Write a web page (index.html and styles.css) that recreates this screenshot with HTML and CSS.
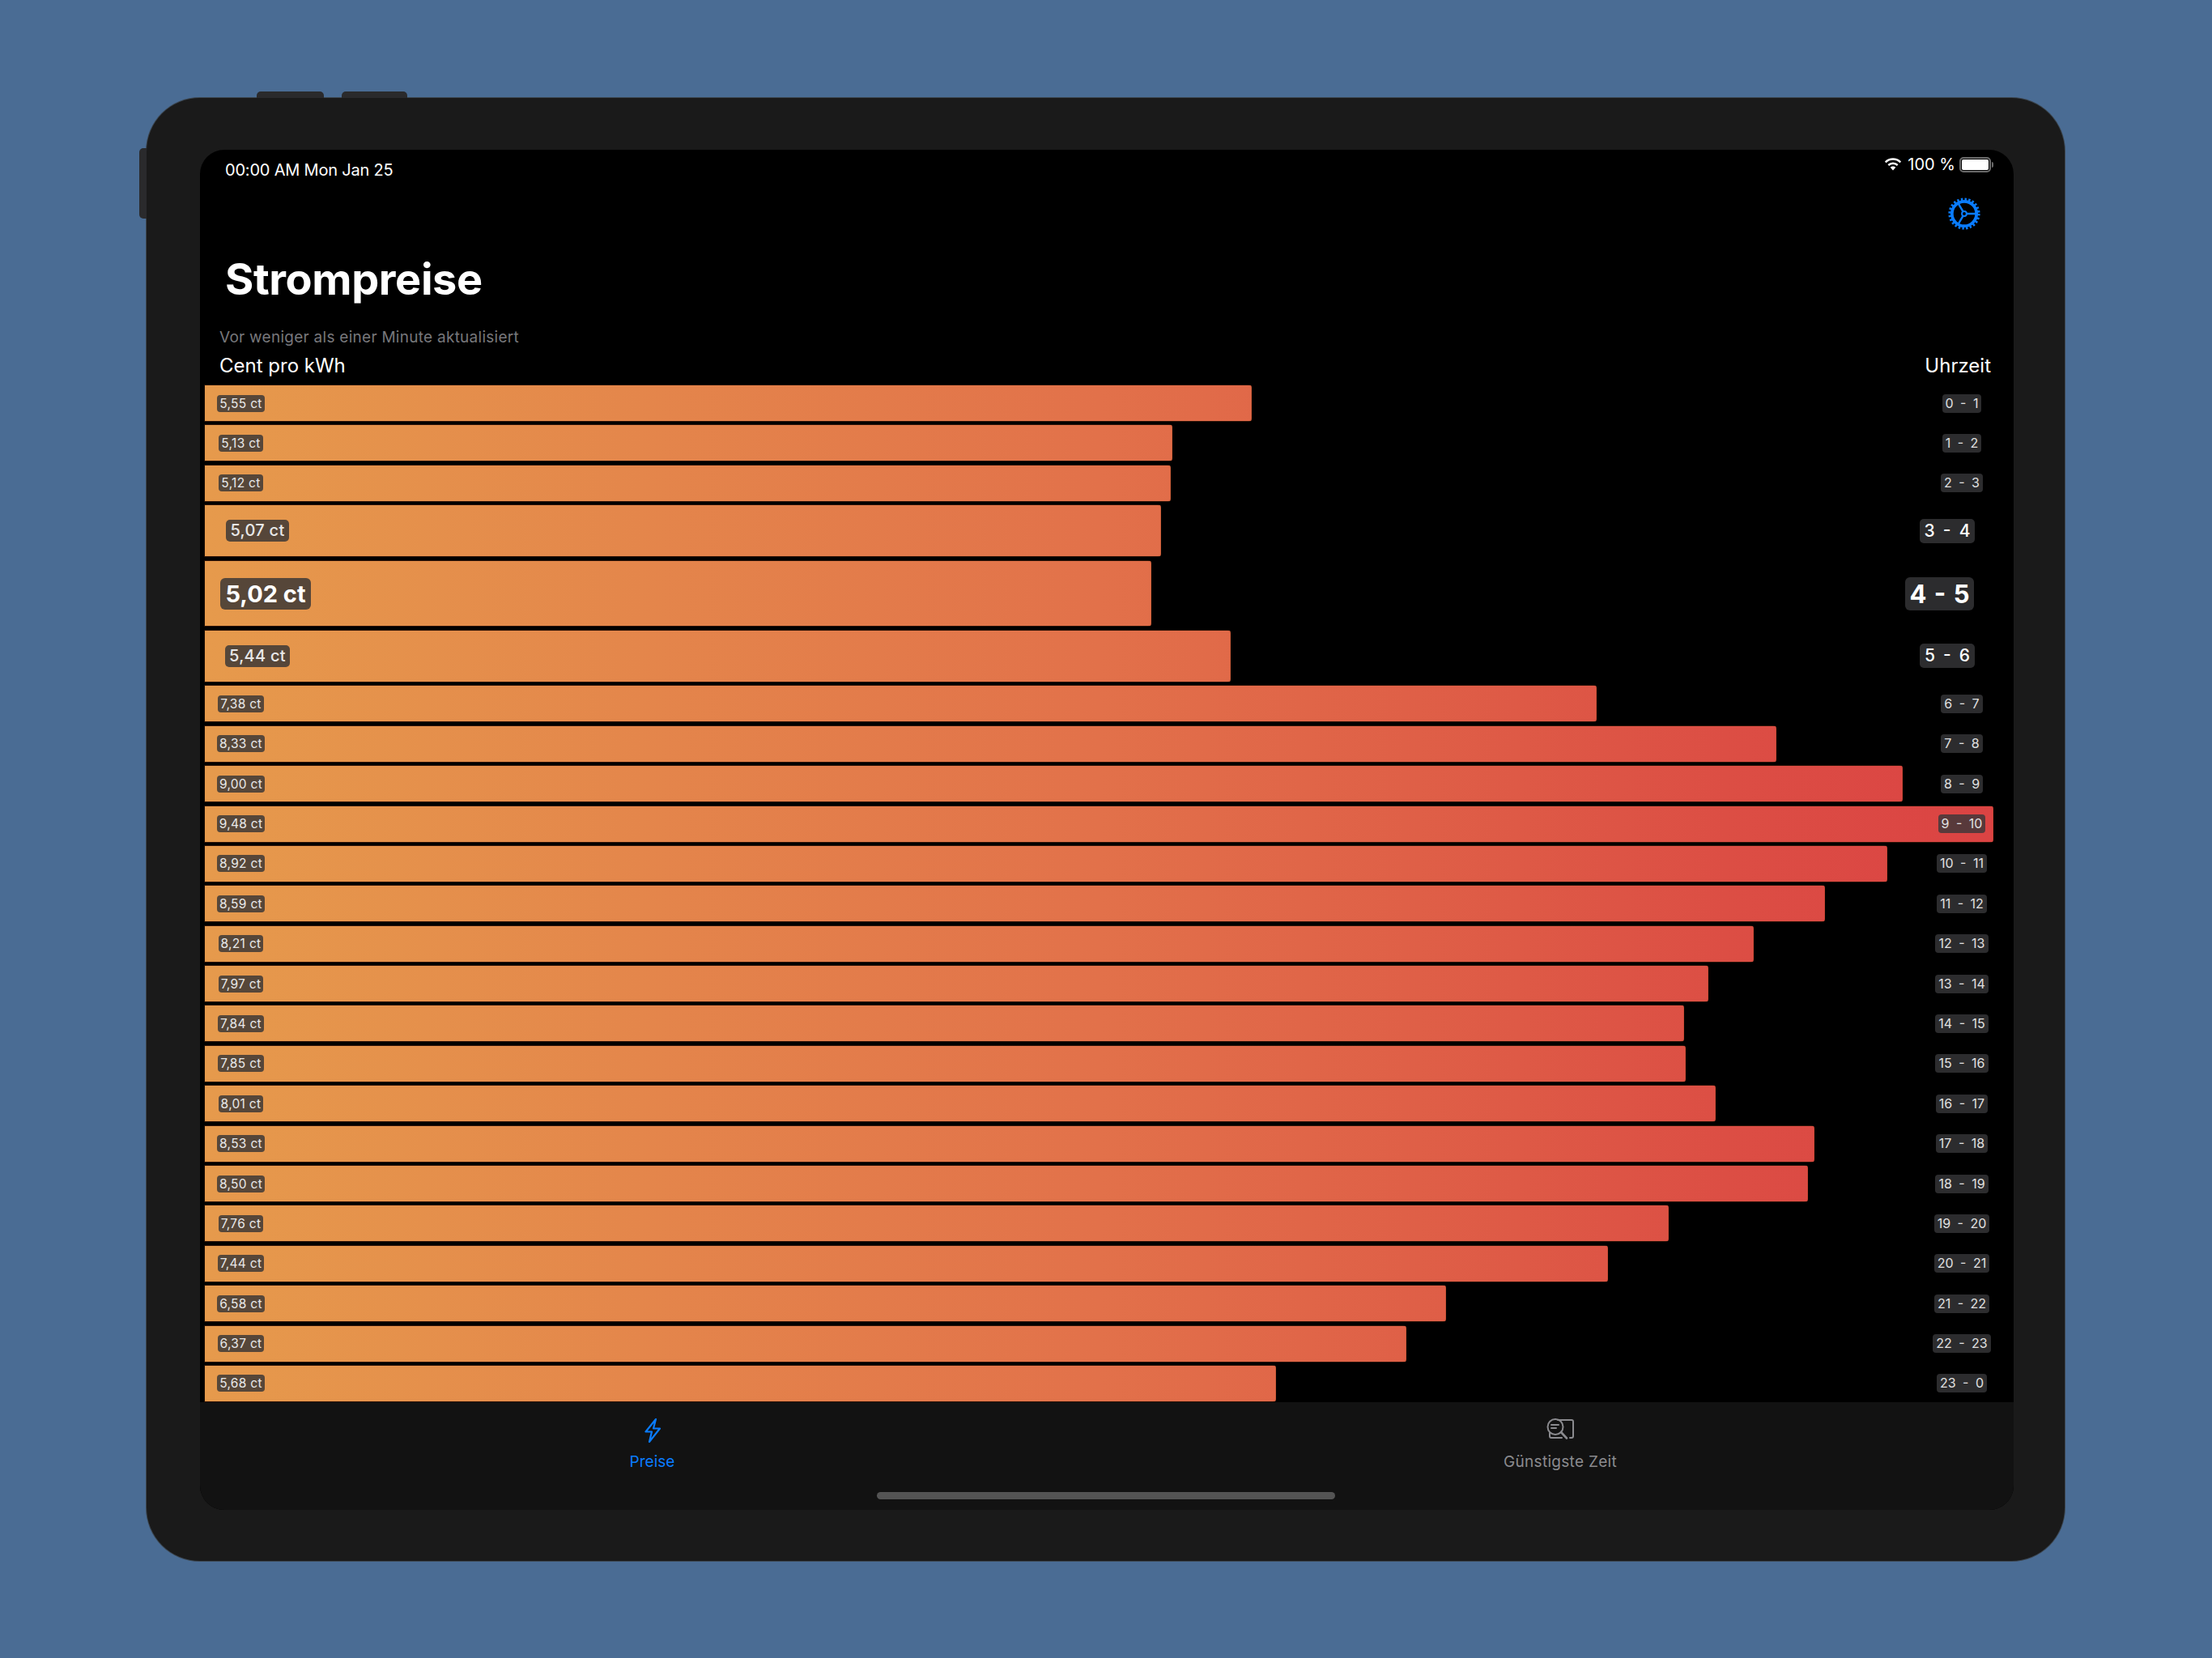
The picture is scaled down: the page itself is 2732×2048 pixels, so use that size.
FILE: index.html
```html
<!DOCTYPE html>
<html lang="de">
<head>
    <meta charset="UTF-8">
    <title>Strompreise</title>
    <link rel="stylesheet" href="styles.css">
</head>
<body>
    <div class="device">
        <div class="hw-btn hw-top-1"></div>
        <div class="hw-btn hw-top-2"></div>
        <div class="hw-btn hw-left"></div>

        <div class="screen">
            <div class="statusbar">
                <span class="clock">00:00 AM Mon Jan 25</span>
                <div class="status-right">
                    <svg class="wifi" viewBox="0 0 22 16" fill="none" stroke="#fff" stroke-width="2.400"><path d="M1.700 5.300C4.200 2.900 7.400 1.500 11 1.500s6.800 1.400 9.300 3.800"/><path d="M5.300 9C6.800 7.600 8.800 6.700 11 6.700s4.200.9 5.700 2.300"/><path d="M7.700 11.800c.9-.8 2-1.300 3.300-1.300s2.400.5 3.300 1.300L11 15.500z" fill="#fff" stroke="none"/></svg>
                    <span class="battery-text">100 %</span>
                    <div class="battery"><div class="battery-fill"></div></div>
                    <div class="battery-nub"></div>
                </div>
            </div>

            <div class="toolbar">
                <svg class="gear" viewBox="0 0 40 40" fill="none" stroke="#0a7cff">
                    <circle cx="20" cy="20" r="15.200" stroke-width="3.800"/>
                    <circle cx="20" cy="20" r="17.800" stroke-width="3.600" stroke-dasharray="2.400 2.260"/>
                    <circle cx="20" cy="20" r="2.900" stroke-width="2"/>
                    <path d="M22.900 20H35M18.550 17.490L12.500 7M18.550 22.510L12.500 33" stroke-width="2.500"/>
                </svg>
            </div>

            <h1 class="title">Strompreise</h1>
            <div class="updated">Vor weniger als einer Minute aktualisiert</div>
            <div class="chart-head">
                <span>Cent pro kWh</span>
                <span>Uhrzeit</span>
            </div>

            <div class="chart">
                <div class="row"><div class="bar" style="width:58.54%"><div class="price"><span>5,55 ct</span></div></div><div class="hour"><span>0 - 1</span></div></div>
                <div class="row"><div class="bar" style="width:54.11%"><div class="price"><span>5,13 ct</span></div></div><div class="hour"><span>1 - 2</span></div></div>
                <div class="row"><div class="bar" style="width:54.01%"><div class="price"><span>5,12 ct</span></div></div><div class="hour"><span>2 - 3</span></div></div>
                <div class="row near"><div class="bar" style="width:53.48%"><div class="price"><span>5,07 ct</span></div></div><div class="hour"><span>3 - 4</span></div></div>
                <div class="row now"><div class="bar" style="width:52.95%"><div class="price"><span>5,02 ct</span></div></div><div class="hour"><span>4 - 5</span></div></div>
                <div class="row near"><div class="bar" style="width:57.38%"><div class="price"><span>5,44 ct</span></div></div><div class="hour"><span>5 - 6</span></div></div>
                <div class="row"><div class="bar" style="width:77.85%"><div class="price"><span>7,38 ct</span></div></div><div class="hour"><span>6 - 7</span></div></div>
                <div class="row"><div class="bar" style="width:87.87%"><div class="price"><span>8,33 ct</span></div></div><div class="hour"><span>7 - 8</span></div></div>
                <div class="row"><div class="bar" style="width:94.94%"><div class="price"><span>9,00 ct</span></div></div><div class="hour"><span>8 - 9</span></div></div>
                <div class="row"><div class="bar" style="width:100%"><div class="price"><span>9,48 ct</span></div></div><div class="hour"><span>9 - 10</span></div></div>
                <div class="row"><div class="bar" style="width:94.09%"><div class="price"><span>8,92 ct</span></div></div><div class="hour"><span>10 - 11</span></div></div>
                <div class="row"><div class="bar" style="width:90.61%"><div class="price"><span>8,59 ct</span></div></div><div class="hour"><span>11 - 12</span></div></div>
                <div class="row"><div class="bar" style="width:86.6%"><div class="price"><span>8,21 ct</span></div></div><div class="hour"><span>12 - 13</span></div></div>
                <div class="row"><div class="bar" style="width:84.07%"><div class="price"><span>7,97 ct</span></div></div><div class="hour"><span>13 - 14</span></div></div>
                <div class="row"><div class="bar" style="width:82.7%"><div class="price"><span>7,84 ct</span></div></div><div class="hour"><span>14 - 15</span></div></div>
                <div class="row"><div class="bar" style="width:82.81%"><div class="price"><span>7,85 ct</span></div></div><div class="hour"><span>15 - 16</span></div></div>
                <div class="row"><div class="bar" style="width:84.49%"><div class="price"><span>8,01 ct</span></div></div><div class="hour"><span>16 - 17</span></div></div>
                <div class="row"><div class="bar" style="width:89.98%"><div class="price"><span>8,53 ct</span></div></div><div class="hour"><span>17 - 18</span></div></div>
                <div class="row"><div class="bar" style="width:89.66%"><div class="price"><span>8,50 ct</span></div></div><div class="hour"><span>18 - 19</span></div></div>
                <div class="row"><div class="bar" style="width:81.86%"><div class="price"><span>7,76 ct</span></div></div><div class="hour"><span>19 - 20</span></div></div>
                <div class="row"><div class="bar" style="width:78.48%"><div class="price"><span>7,44 ct</span></div></div><div class="hour"><span>20 - 21</span></div></div>
                <div class="row"><div class="bar" style="width:69.41%"><div class="price"><span>6,58 ct</span></div></div><div class="hour"><span>21 - 22</span></div></div>
                <div class="row"><div class="bar" style="width:67.19%"><div class="price"><span>6,37 ct</span></div></div><div class="hour"><span>22 - 23</span></div></div>
                <div class="row"><div class="bar" style="width:59.92%"><div class="price"><span>5,68 ct</span></div></div><div class="hour"><span>23 - 0</span></div></div>
            </div>

            <div class="tabbar">
                <div class="tab active">
                    <svg class="tab-icon" viewBox="0 0 22 32" fill="none" stroke="#0a7cff" stroke-width="2.200" stroke-linejoin="round"><path d="M15 2L2.500 17.500h7.500L7 30l13-16.500h-8z"/></svg>
                    <span>Preise</span>
                </div>
                <div class="tab">
                    <svg class="tab-icon" viewBox="0 0 34 32" fill="none" stroke="#8a8a8e" stroke-width="2" stroke-linecap="round"><path d="M14 3h17a2 2 0 0 1 2 2v18a2 2 0 0 1-2 2h-2M4 19v4a2 2 0 0 0 2 2h13"/><circle cx="11" cy="11.500" r="9.500"/><path d="M18 18l7 7.500" stroke-width="2.600"/><path d="M6 9h9M6 13h6"/></svg>
                    <span>Günstigste Zeit</span>
                </div>
                <div class="home-indicator"></div>
            </div>
        </div>
    </div>
</body>
</html>
```

FILE: styles.css
```css
body {
    margin: 0;
    box-sizing: border-box;
    width: 2732px;
    height: 2048px;
    padding: 1px 1px 0 0;
    background-color: #4a6c94;
    display: flex;
    align-items: center;
    justify-content: center;
    font-family: Inter, "Liberation Sans", sans-serif;
    overflow: hidden;
}

.device {
    position: relative;
    width: 2369px;
    height: 1807px;
    box-sizing: border-box;
    padding: 64px 63px 63px 66px;
    background-color: #1a1a1a;
    border-radius: 66px;
    box-shadow: 0 0 0 1px #3c4650;
}

.hw-btn {
    position: absolute;
    background-color: #2a2a2c;
}

.hw-top-1 {
    left: 136px;
    top: -8px;
    width: 83px;
    height: 8px;
    border-radius: 5px 5px 0 0;
}

.hw-top-2 {
    left: 241px;
    top: -8px;
    width: 81px;
    height: 8px;
    border-radius: 5px 5px 0 0;
}

.hw-left {
    left: -9px;
    top: 62px;
    width: 9px;
    height: 87px;
    border-radius: 5px 0 0 5px;
}

.screen {
    position: relative;
    height: 100%;
    background-color: #000;
    border-radius: 30px;
    overflow: hidden;
    color: #fff;
    display: flex;
    flex-direction: column;
}

/* statusleiste */
.statusbar {
    height: 48px;
    flex: none;
    display: flex;
    justify-content: space-between;
    align-items: center;
    padding: 0 25px 0 31px;
}

.clock {
    font-size: 20px;
    letter-spacing: -0.2px;
    padding-top: 1px;
}

.status-right {
    display: flex;
    align-items: center;
    margin-bottom: 12px;
}

.wifi {
    width: 22px;
    height: 16px;
    margin-right: 7px;
}

.battery-text {
    font-size: 20px;
    margin-right: 5px;
}

.battery {
    width: 39px;
    height: 19px;
    box-sizing: border-box;
    border: 2px solid #6a6a6a;
    border-radius: 5px;
    padding: 1px;
}

.battery-fill {
    height: 100%;
    background-color: #fff;
    border-radius: 2px;
}

.battery-nub {
    width: 2px;
    height: 7px;
    margin-left: 1px;
    background-color: #6a6a6a;
    border-radius: 0 2px 2px 0;
}

.toolbar {
    height: 62px;
    flex: none;
    display: flex;
    justify-content: flex-end;
    align-items: center;
    padding-right: 41px;
}

.gear {
    width: 40px;
    height: 40px;
}

.title {
    flex: none;
    margin: 0;
    height: 83px;
    padding: 17px 0 0 31px;
    font-size: 54px;
    line-height: 66px;
    font-weight: 700;
    letter-spacing: -0.4px;
}

.updated {
    flex: none;
    height: 44px;
    line-height: 44px;
    padding-left: 24px;
    font-size: 19px;
    letter-spacing: 0.27px;
    color: #77777b;
}

.chart-head {
    flex: none;
    display: flex;
    justify-content: space-between;
    padding: 0 28px 10px 24px;
    font-size: 24px;
    line-height: 26px;
}

/* balken */
.chart {
    flex: none;
    display: flex;
    flex-direction: column;
    gap: 3.4px;
    margin: 0 25px 0 5px;
    height: 1257px;
}

.row {
    flex: none;
    display: grid;
    height: 46px;
}

.row.near {
    height: 65.3px;
}

.row.now {
    height: 82.4px;
}

.bar {
    grid-area: 1 / 1;
    display: flex;
    box-sizing: border-box;
    border: 1px solid rgba(150, 60, 20, 0.3);
    border-left-color: rgba(150, 60, 20, 0.15);
    border-radius: 0 4px 4px 0;
    background-image: linear-gradient(90deg, #e69a4c 0%, #e2714a 50%, #dc4e44 85%, #db4343 100%);
    background-size: 2210px 100%;
    background-repeat: no-repeat;
}

.price {
    width: 89px;
    display: flex;
    align-items: center;
    justify-content: center;
    font-size: 15.5px;
    line-height: 21px;
    letter-spacing: 0.3px;
    color: #e8e8e8;
}

.price span {
    padding: 0 3px;
    border-radius: 4px;
    background-color: rgba(50, 50, 52, 0.8);
}

.hour {
    grid-area: 1 / 1;
    justify-self: end;
    width: 78px;
    display: flex;
    align-items: center;
    justify-content: center;
    font-size: 16px;
    line-height: 23px;
    word-spacing: 4px;
    color: #e0e0e0;
}

.hour span {
    padding: 0 4px;
    border-radius: 4px;
    background-color: rgba(55, 55, 58, 0.8);
}

.row.near .price {
    width: 130px;
    font-size: 20px;
    line-height: 27px;
    font-weight: 500;
}

.row.near .price span {
    padding: 0 5px;
    border-radius: 5px;
}

.row.near .hour {
    width: 114px;
    font-size: 21px;
    line-height: 30px;
    font-weight: 500;
    word-spacing: 4.5px;
    color: #fff;
}

.row.near .hour span {
    padding: 0 6px;
    border-radius: 5px;
}

.row.now .price {
    width: 150px;
    font-size: 29px;
    line-height: 39px;
    font-weight: 700;
    letter-spacing: 0;
    color: #fff;
}

.row.now .price span {
    padding: 0 6px;
    border-radius: 6px;
}

.row.now .hour {
    width: 133px;
    font-size: 31px;
    line-height: 41px;
    font-weight: 700;
    word-spacing: 2px;
    color: #fff;
}

.row.now .hour span {
    padding: 0 6px;
    border-radius: 6px;
}

/* tabs */
.tabbar {
    position: relative;
    flex: 1;
    display: grid;
    grid-template-columns: 1fr 1fr;
    background-color: #121212;
}

.tab {
    display: flex;
    flex-direction: column;
    align-items: center;
    padding-top: 19px;
    font-size: 19px;
    letter-spacing: 0.3px;
    color: #8a8a8e;
}

.tab.active {
    padding-right: 3px;
    letter-spacing: 0;
    color: #0a7cff;
}

.tab-icon {
    height: 32px;
    margin-bottom: 11px;
}

.home-indicator {
    position: absolute;
    left: 836px;
    bottom: 13px;
    width: 566px;
    height: 9px;
    border-radius: 5px;
    background-color: #545454;
}
```
